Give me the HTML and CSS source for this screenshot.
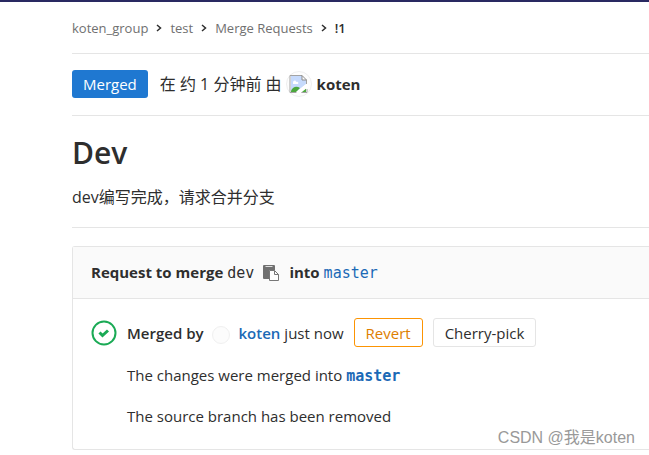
FILE: index.html
```html
<!DOCTYPE html>
<html lang="zh-CN">
<head>
<meta charset="utf-8">
<title>Dev (!1) · Merge Requests</title>
<link rel="stylesheet" href="styles.css">
</head>
<body>
<main class="page">
  <nav class="crumbs">
    <a href="#">koten_group</a>
    <svg class="chevron" viewBox="0 0 6 8"><path d="M1 1l3.500 3L1 7"/></svg>
    <a href="#">test</a>
    <svg class="chevron" viewBox="0 0 6 8"><path d="M1 1l3.500 3L1 7"/></svg>
    <a href="#">Merge Requests</a>
    <svg class="chevron" viewBox="0 0 6 8"><path d="M1 1l3.500 3L1 7"/></svg>
    <a href="#" class="current">!1</a>
  </nav>

  <div class="status">
    <span class="badge">Merged</span>
    <span class="when">在 约 1 分钟前 由</span>
    <svg class="avatar" viewBox="0 0 26 26">
      <circle cx="13" cy="13" r="12.500" fill="#fdfdfd" stroke="#eee"/>
      <path d="M4 4h12l5 5v12H4z" fill="#fff"/>
      <path d="M5 5h11v4h4v4l-9 7H5z" fill="#c6dafc"/>
      <path d="M7 12c0-3 3-3 3-1 2-1 3 1 2 2H7z" fill="#fff"/>
      <path d="M5 20c2-5 6-5 9-3l-4 4H5z" fill="#4ba83c"/>
      <path d="M15 21l5-4v4z" fill="#4ba83c"/>
      <path d="M4 21.500V4.500h12M20.500 9v4M4 21.500h7M15 21.500h6V18" fill="none" stroke="#a3a3a3"/>
      <path d="M16 4.500V9h4.500z" fill="#fff" stroke="#8c8c8c"/>
      <path d="M11 23l11-9" stroke="#fff" stroke-width="3"/>
    </svg>
    <a href="#" class="author">koten</a>
  </div>

  <header class="detail">
    <h1>Dev</h1>
    <p>dev编写完成，请求合并分支</p>
  </header>

  <section class="panel">
    <div class="panel-head">
      <span>Request to merge</span>
      <code>dev</code>
      <button class="copy" type="button" aria-label="Copy branch name">
        <svg viewBox="0 0 17 17">
          <path d="M1 0h10a1 1 0 0 1 1 1v4H8a2 2 0 0 0-2 2v7H1a1 1 0 0 1-1-1V1a1 1 0 0 1 1-1z" fill="#707070"/>
          <path d="M2.500 1.500h7" stroke="#ddd"/>
          <path d="M6.500 5.500h5l4 4v6h-9z" fill="#fff" stroke="#777"/>
          <path d="M11.500 5.500v4h4" fill="none" stroke="#777"/>
        </svg>
      </button>
      <span>into</span>
      <a href="#" class="branch">master</a>
    </div>
    <div class="panel-body">
      <svg class="check" viewBox="0 0 26 26"><circle cx="13" cy="13" r="11.500"/><path class="tick" d="M8.500 12.500l3 3 5.500-5"/></svg>
      <div class="result">
        <div class="merged-by">
          <strong>Merged by</strong>
          <span class="blank-avatar"></span>
          <a href="#" class="merger">koten</a>
          <span>just now</span>
          <button class="btn revert" type="button">Revert</button>
          <button class="btn" type="button">Cherry-pick</button>
        </div>
        <p>The changes were merged into <a href="#" class="branch bold">master</a></p>
        <p>The source branch has been removed</p>
      </div>
    </div>
  </section>
</main>
<div class="watermark">CSDN @我是koten</div>
</body>
</html>
```
FILE: styles.css
```css
* { box-sizing: border-box; }
body {
  margin: 0;
  border-top: 2px solid #292961;
  background: #fff;
  color: #2e2e2e;
  font: 15px/20px "Open Sans", "Noto Sans CJK SC", sans-serif;
  overflow-x: hidden;
}
a { color: inherit; text-decoration: none; }
p, h1 { margin: 0; }
.page { padding-left: 72px; }
.crumbs {
  display: flex;
  align-items: center;
  height: 52px;
  border-bottom: 1px solid #e5e5e5;
  color: #707070;
  font-size: 13px;
}
.chevron {
  width: 6px;
  height: 8px;
  margin: 0 8px;
  fill: none;
  stroke: #2e2e2e;
  stroke-width: 1.500;
}
.current { color: #2e2e2e; font-weight: 600; }
.status {
  display: flex;
  align-items: center;
  height: 62px;
  padding-bottom: 2px;
  border-bottom: 1px solid #e5e5e5;
}
.badge {
  padding: 4px 11px;
  border-radius: 3px;
  background: #1f78d1;
  color: #fff;
}
.when { margin-left: 12px; font-size: 16px; }
.avatar { width: 26px; height: 26px; margin: 0 5px 0 4px; }
.author { font-weight: 700; }
.detail {
  height: 112px;
  padding-top: 16px;
  border-bottom: 1px solid #e5e5e5;
}
.detail h1 { font-size: 30px; line-height: 42px; font-weight: 600; }
.detail p { margin-top: 13px; font-size: 16px; }
.panel {
  margin-top: 18px;
  border: 1px solid #e5e5e5;
  border-right: 0;
  border-radius: 3px 0 0 3px;
}
.panel-head {
  display: flex;
  align-items: baseline;
  height: 52px;
  padding: 15px 0 0 18px;
  border-bottom: 1px solid #e5e5e5;
  background: #fafafa;
  font-weight: 700;
}
code, .branch { font: 15px/20px "DejaVu Sans Mono", monospace; }
code { margin-left: 4px; }
.copy {
  align-self: flex-start;
  width: 17px;
  height: 17px;
  margin: 3px 9px 0;
  padding: 0;
  border: 0;
  background: none;
}
.copy svg { display: block; }
.branch { color: #1b69b6; }
.panel-head .branch { margin-left: 4px; }
.bold { font-weight: 700; }
.panel-body { display: flex; padding: 19px 0 20px 18px; }
.check {
  width: 26px;
  height: 26px;
  margin-top: 2px;
  fill: none;
  stroke: #1aaa55;
  stroke-width: 2;
}
.tick { stroke-width: 3; }
.result { margin-left: 10px; }
.merged-by { display: flex; align-items: center; height: 29px; white-space: nowrap; }
.merged-by strong { font-weight: 600; }
.blank-avatar {
  width: 18px;
  height: 18px;
  margin: 4px 9px 0 8px;
  border: 1px solid #f0f0f0;
  border-radius: 50%;
  background: #fcfcfc;
}
.merger { margin-right: 4px; color: #1b69b6; font-weight: 600; }
.btn {
  height: 29px;
  margin-left: 10px;
  padding: 0 11px;
  border: 1px solid #e5e5e5;
  border-radius: 3px;
  background: #fff;
  color: #2e2e2e;
  font: inherit;
}
.revert { border-color: #fc9403; color: #de7e00; }
.result p { margin-top: 16px; line-height: 25px; }
.watermark {
  position: absolute;
  right: 14px;
  bottom: 7px;
  color: #999;
  font: 16px/20px "Liberation Sans", "Noto Sans CJK SC", sans-serif;
}
```
